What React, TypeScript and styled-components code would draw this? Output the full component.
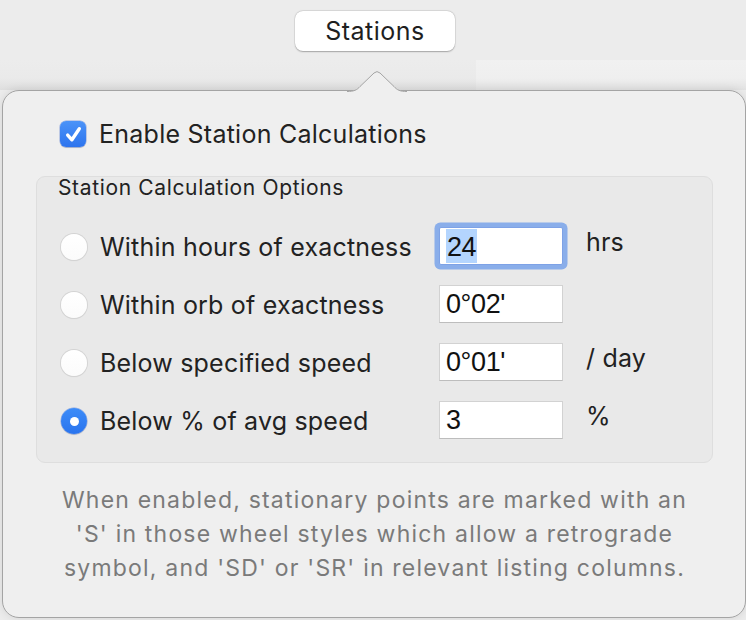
import React from "react";
import styled, { createGlobalStyle } from "styled-components";

const Global = createGlobalStyle`
  html, body { margin: 0; padding: 0; background: #ececec; }
  body { font-family: Inter, "Liberation Sans", sans-serif; -webkit-font-smoothing: antialiased; }
`;

const Page = styled.div`
  width: 746px;
  height: 620px;
  overflow: hidden;
  background: #ececec;
  display: flex;
  flex-direction: column;
`;

const Top = styled.div`
  height: 90px;
  display: flex;
  flex-direction: column;
`;

const ButtonRow = styled.div`
  height: 60px;
  display: flex;
  justify-content: center;
  align-items: flex-start;
  padding-top: 11px;
  padding-left: 4px;
  box-sizing: border-box;
`;

const TabButton = styled.div`
  width: 160px;
  height: 40px;
  border-radius: 8px;
  background: #ffffff;
  box-shadow: 0 0.5px 1.5px rgba(0, 0, 0, 0.28), 0 0 0 0.5px rgba(0, 0, 0, 0.08);
  display: flex;
  align-items: center;
  justify-content: center;
  font-size: 25px;
  letter-spacing: 0.5px;
  color: #1f1f1f;
`;

const BehindRow = styled.div`
  flex: 1;
  display: grid;
  grid-template-columns: 476px 1fr;
`;

const BehindCell = styled.div<{ $light?: boolean }>`
  background: ${(p) =>
    p.$light
      ? "linear-gradient(#f1f1f1, #efefef 60%, #e2e2e2)"
      : "linear-gradient(#ececec, #eaeaea 60%, #dedede)"};
`;

const Popover = styled.div`
  position: relative;
  margin-left: 2px;
  width: 744px;
  height: 528px;
  box-sizing: border-box;
  border: 1px solid #a4a4a4;
  border-radius: 17px;
  background: #efefef;
  box-shadow: 0 0 10px rgba(0, 0, 0, 0.1);
  padding: 28px 32px 0 33px;
  display: flex;
  flex-direction: column;
`;

const Arrow = styled.svg`
  position: absolute;
  top: -20px;
  left: 344px;
  width: 60px;
  height: 21px;
  overflow: visible;
`;

const CheckRow = styled.label`
  display: flex;
  align-items: center;
  gap: 13px;
  margin-left: 24px;
  height: 30px;
  font-size: 25px;
  letter-spacing: 0.25px;
  color: #222;
`;

const CheckBox = styled.span`
  width: 26px;
  height: 26px;
  border-radius: 6px;
  background: linear-gradient(#4b93f8, #2d74ee);
  box-shadow: 0 0 0 0.5px rgba(0, 60, 200, 0.4), 0 1px 1px rgba(0, 0, 0, 0.15);
  display: flex;
  align-items: center;
  justify-content: center;
`;

const Group = styled.div`
  margin-top: 27px;
  height: 287px;
  box-sizing: border-box;
  border: 1px solid #dedede;
  border-radius: 9px;
  background: #e9e9e9;
  padding: 0 0 0 21px;
  display: flex;
  flex-direction: column;
`;

const GroupTitle = styled.div`
  height: 21px;
  line-height: 21px;
  font-size: 21px;
  letter-spacing: 0.65px;
  color: #222;
`;

const Rows = styled.div`
  margin-top: 19px;
  display: flex;
  flex-direction: column;
`;

const Row = styled.div`
  height: 58px;
  display: grid;
  grid-template-columns: 377px 124px 23px auto;
  align-items: center;
  margin-left: 4px;
`;

const OptionLabel = styled.div`
  display: flex;
  align-items: center;
  gap: 14px;
  font-size: 25px;
  letter-spacing: 0.2px;
  color: #222;
  padding-top: 2px;
`;

const Radio = styled.span<{ $on?: boolean }>`
  width: 26px;
  height: 26px;
  margin-left: -1px;
  margin-right: -1px;
  border-radius: 50%;
  box-sizing: border-box;
  flex: none;
  display: flex;
  align-items: center;
  justify-content: center;
  background: ${(p) => (p.$on ? "linear-gradient(#3d8cf8, #2a74ee)" : "linear-gradient(#ffffff, #fbfbfb)")};
  box-shadow: ${(p) =>
    p.$on
      ? "0 0 0 0.5px rgba(0, 60, 200, 0.4), 0 1px 1px rgba(0,0,0,0.12)"
      : "0 0 0 1px #d4d4d4, 0 1px 1px rgba(0,0,0,0.1)"};
  &::after {
    content: "";
    display: ${(p) => (p.$on ? "block" : "none")};
    width: 9px;
    height: 9px;
    border-radius: 50%;
    background: #fff;
  }
`;

const FieldWrap = styled.div<{ $focus?: boolean }>`
  position: relative;
  width: 124px;
  height: 38px;
  box-sizing: border-box;
  background: #fff;
  border: 1px solid ${(p) => (p.$focus ? "#7ea2e6" : "#d2d2d2")};
  border-bottom-color: ${(p) => (p.$focus ? "#7ea2e6" : "#bdbdbd")};
  box-shadow: ${(p) => (p.$focus ? "0 0 0 4.5px #8aaeea" : "none")};
  border-radius: ${(p) => (p.$focus ? "2px" : "0")};
  display: flex;
  align-items: center;
  padding-left: 6px;
  font-family: "Liberation Sans", Arial, sans-serif;
  font-size: 27px;
  letter-spacing: -0.4px;
  color: #111;
`;

const Selected = styled.span`
  background: #b4d5fe;
  height: 34px;
  line-height: 36px;
  padding: 0 1px;
`;

const Unit = styled.div`
  grid-column: 4;
  align-self: center;
  font-size: 25px;
  letter-spacing: 0.2px;
  color: #222;
  margin-top: -8px;
`;

const Desc = styled.div`
  margin-top: 20px;
  text-align: center;
  font-size: 23px;
  letter-spacing: 1.2px;
  line-height: 34px;
  color: #7a7a7a;
`;

const options = [
  { label: "Within hours of exactness", value: "24", unit: "hrs", focus: true, on: false },
  { label: "Within orb of exactness", value: "0°02'", unit: "", focus: false, on: false },
  { label: "Below specified speed", value: "0°01'", unit: "/ day", focus: false, on: false },
  { label: "Below % of avg speed", value: "3", unit: "%", focus: false, on: true },
];

export default function App() {
  return (
    <Page>
      <Global />
      <Top>
        <ButtonRow>
          <TabButton>Stations</TabButton>
        </ButtonRow>
        <BehindRow>
          <BehindCell />
          <BehindCell $light />
        </BehindRow>
      </Top>
      <Popover>
        <Arrow viewBox="0 0 60 21">
          <path
            d="M0 20.5 C7 20.5 10 19 13 15.5 L27 2 Q30 -0.8 33 2 L47 15.5 C50 19 53 20.5 60 20.5 L60 21 L0 21 Z"
            fill="#efefef"
          />
          <path
            d="M0 20.5 C7 20.5 10 19 13 15.5 L27 2 Q30 -0.8 33 2 L47 15.5 C50 19 53 20.5 60 20.5"
            fill="none"
            stroke="#a4a4a4"
            strokeWidth="1"
          />
        </Arrow>
        <CheckRow>
          <CheckBox>
            <svg width="19" height="19" viewBox="0 0 18 18">
              <path d="M3.5 9.5 L7.5 14 L14.5 3.5" fill="none" stroke="#fff" strokeWidth="3.2" strokeLinecap="round" strokeLinejoin="round" />
            </svg>
          </CheckBox>
          Enable Station Calculations
        </CheckRow>
        <Group>
          <GroupTitle>Station Calculation Options</GroupTitle>
          <Rows>
            {options.map((o) => (
              <Row key={o.label}>
                <OptionLabel>
                  <Radio $on={o.on} />
                  {o.label}
                </OptionLabel>
                <FieldWrap $focus={o.focus}>
                  {o.focus ? <Selected>{o.value}</Selected> : o.value}
                </FieldWrap>
                <Unit>{o.unit}</Unit>
              </Row>
            ))}
          </Rows>
        </Group>
        <Desc>
          When enabled, stationary points are marked with an
          <br />
          'S' in those wheel styles which allow a retrograde
          <br />
          symbol, and 'SD' or 'SR' in relevant listing columns.
        </Desc>
      </Popover>
    </Page>
  );
}
